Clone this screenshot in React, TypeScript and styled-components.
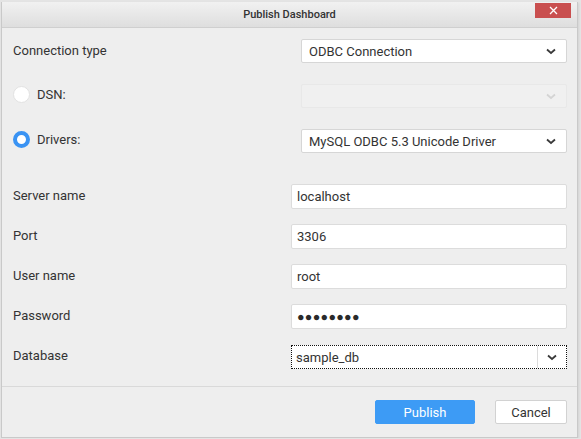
import React from "react";
import styled, { createGlobalStyle } from "styled-components";

const Global = createGlobalStyle`
  html, body { margin: 0; padding: 0; }
  body {
    background: #e4e4e4;
    font-family: Roboto, "Liberation Sans", Arial, sans-serif;
    color: #333;
  }
`;

const Window = styled.div`
  box-sizing: border-box;
  width: 577px;
  height: 436px;
  margin: 2px 0 0 1px;
  border: 1px solid #c9c9c9;
  border-top: none;
  background: #eeeeee;
  display: flex;
  flex-direction: column;
  box-shadow: 1px 1px 2px rgba(0,0,0,0.08);
`;

const TitleBar = styled.div`
  height: 25px;
  flex: none;
  display: grid;
  grid-template-columns: 1fr auto 1fr;
  align-items: start;
  background: linear-gradient(#f1f1f1, #dedede);
  border-bottom: 1px solid #cfcfcf;
`;

const Title = styled.div`
  grid-column: 2;
  font-size: 11px;
  font-weight: 500;
  line-height: 25px;
  color: #333;
`;

const CloseButton = styled.button`
  grid-column: 3;
  justify-self: end;
  margin: 1px 6px 0 0;
  width: 36px;
  height: 15px;
  border: none;
  padding: 0;
  background: #c94f4f;
  display: flex;
  align-items: center;
  justify-content: center;
`;

const Form = styled.div`
  flex: 1;
  display: flex;
  flex-direction: column;
  padding: 11px 10px 0 11px;
`;

const Group = styled.div<{ $gap: number; $top?: number }>`
  display: flex;
  flex-direction: column;
  gap: ${(p) => p.$gap}px;
  margin-top: ${(p) => p.$top ?? 0}px;
`;

const Row = styled.div<{ $h: number }>`
  display: flex;
  align-items: center;
  justify-content: space-between;
  height: ${(p) => p.$h}px;
`;

const Label = styled.div`
  font-size: 13px;
  color: #333;
  margin-top: -2px;
`;

const RadioLabel = styled.label`
  display: flex;
  align-items: center;
  gap: 7px;
  font-size: 13px;
  color: #333;
  margin-top: -4px;
`;

const Radio = styled.span<{ $checked?: boolean }>`
  box-sizing: border-box;
  width: 17px;
  height: 17px;
  border-radius: 50%;
  background: #fff;
  border: ${(p) => (p.$checked ? "4px solid #3a93f3" : "1px solid #e2e2e2")};
`;

const Select = styled.div<{ $disabled?: boolean; $w: number }>`
  box-sizing: border-box;
  width: ${(p) => p.$w}px;
  height: 24px;
  display: flex;
  align-items: center;
  justify-content: space-between;
  padding: 0 10px 0 7px;
  font-size: 13px;
  color: #333;
  border-radius: 2px;
  background: ${(p) => (p.$disabled ? "#f0f0f0" : "#fff")};
  border: 1px solid ${(p) => (p.$disabled ? "#e8e8e8" : "#d6d6d6")};
`;

const Input = styled.div<{ $w: number }>`
  box-sizing: border-box;
  width: ${(p) => p.$w}px;
  height: 25px;
  display: flex;
  align-items: center;
  padding: 0 5px;
  font-size: 13px;
  color: #333;
  background: #fff;
  border: 1px solid #dcdcdc;
  border-radius: 2px;
`;

const Dots = styled.span`
  font-size: 12.5px;
  letter-spacing: 0.3px;
  color: #2a2a2a;
`;

const Combo = styled.div<{ $w: number }>`
  box-sizing: border-box;
  width: ${(p) => p.$w}px;
  height: 24px;
  margin-top: 1px;
  display: flex;
  background: #fff;
  border: 1px dotted #111;
`;

const ComboText = styled.div`
  flex: 1;
  display: flex;
  align-items: center;
  padding: 0 4px;
  font-size: 13px;
  color: #333;
`;

const ComboButton = styled.div`
  width: 28px;
  border-left: 1px solid #dcdcdc;
  display: flex;
  align-items: center;
  justify-content: center;
`;

const Footer = styled.div`
  margin-top: auto;
  height: 51px;
  box-sizing: border-box;
  border-top: 1px solid #d9d9d9;
  display: flex;
  justify-content: flex-end;
  gap: 20px;
  padding: 13px 10px 0 0;
`;

const Button = styled.button<{ $primary?: boolean; $w: number }>`
  width: ${(p) => p.$w}px;
  height: 24px;
  font-family: Roboto, "Liberation Sans", Arial, sans-serif;
  font-size: 13px;
  border-radius: 2px;
  padding: 0;
  color: ${(p) => (p.$primary ? "#fff" : "#333")};
  background: ${(p) => (p.$primary ? "#3d9bf5" : "#fff")};
  border: 1px solid ${(p) => (p.$primary ? "#3d9bf5" : "#d2d2d2")};
`;

const Chevron = ({ light }: { light?: boolean }) => (
  <svg width="10" height="7" viewBox="0 0 10 7">
    <polyline
      points="1,1.5 5,5 9,1.5"
      fill="none"
      stroke={light ? "#d4d4d4" : "#3a3a3a"}
      strokeWidth="1.8"
    />
  </svg>
);

export default function App() {
  return (
    <>
      <Global />
      <Window>
        <TitleBar>
          <Title>Publish Dashboard</Title>
          <CloseButton aria-label="Close">
            <svg width="9" height="9" viewBox="0 0 9 9">
              <path d="M1 1 L8 8 M8 1 L1 8" stroke="#fff" strokeWidth="1.3" />
            </svg>
          </CloseButton>
        </TitleBar>
        <Form>
          <Group $gap={21}>
            <Row $h={24}>
              <Label>Connection type</Label>
              <Select $w={266}>
                ODBC Connection
                <Chevron />
              </Select>
            </Row>
            <Row $h={24}>
              <RadioLabel>
                <Radio />
                DSN:
              </RadioLabel>
              <Select $w={266} $disabled>
                <span />
                <Chevron light />
              </Select>
            </Row>
            <Row $h={24}>
              <RadioLabel>
                <Radio $checked />
                Drivers:
              </RadioLabel>
              <Select $w={266}>
                MySQL ODBC 5.3 Unicode Driver
                <Chevron />
              </Select>
            </Row>
          </Group>
          <Group $gap={15} $top={31}>
            <Row $h={25}>
              <Label>Server name</Label>
              <Input $w={276}>localhost</Input>
            </Row>
            <Row $h={25}>
              <Label>Port</Label>
              <Input $w={276}>3306</Input>
            </Row>
            <Row $h={25}>
              <Label>User name</Label>
              <Input $w={276}>root</Input>
            </Row>
            <Row $h={25}>
              <Label>Password</Label>
              <Input $w={276}>
                <Dots>●●●●●●●●</Dots>
              </Input>
            </Row>
            <Row $h={25}>
              <Label>Database</Label>
              <Combo $w={276}>
                <ComboText>sample_db</ComboText>
                <ComboButton>
                  <Chevron />
                </ComboButton>
              </Combo>
            </Row>
          </Group>
        </Form>
        <Footer>
          <Button $primary $w={100}>Publish</Button>
          <Button $w={72}>Cancel</Button>
        </Footer>
      </Window>
    </>
  );
}
